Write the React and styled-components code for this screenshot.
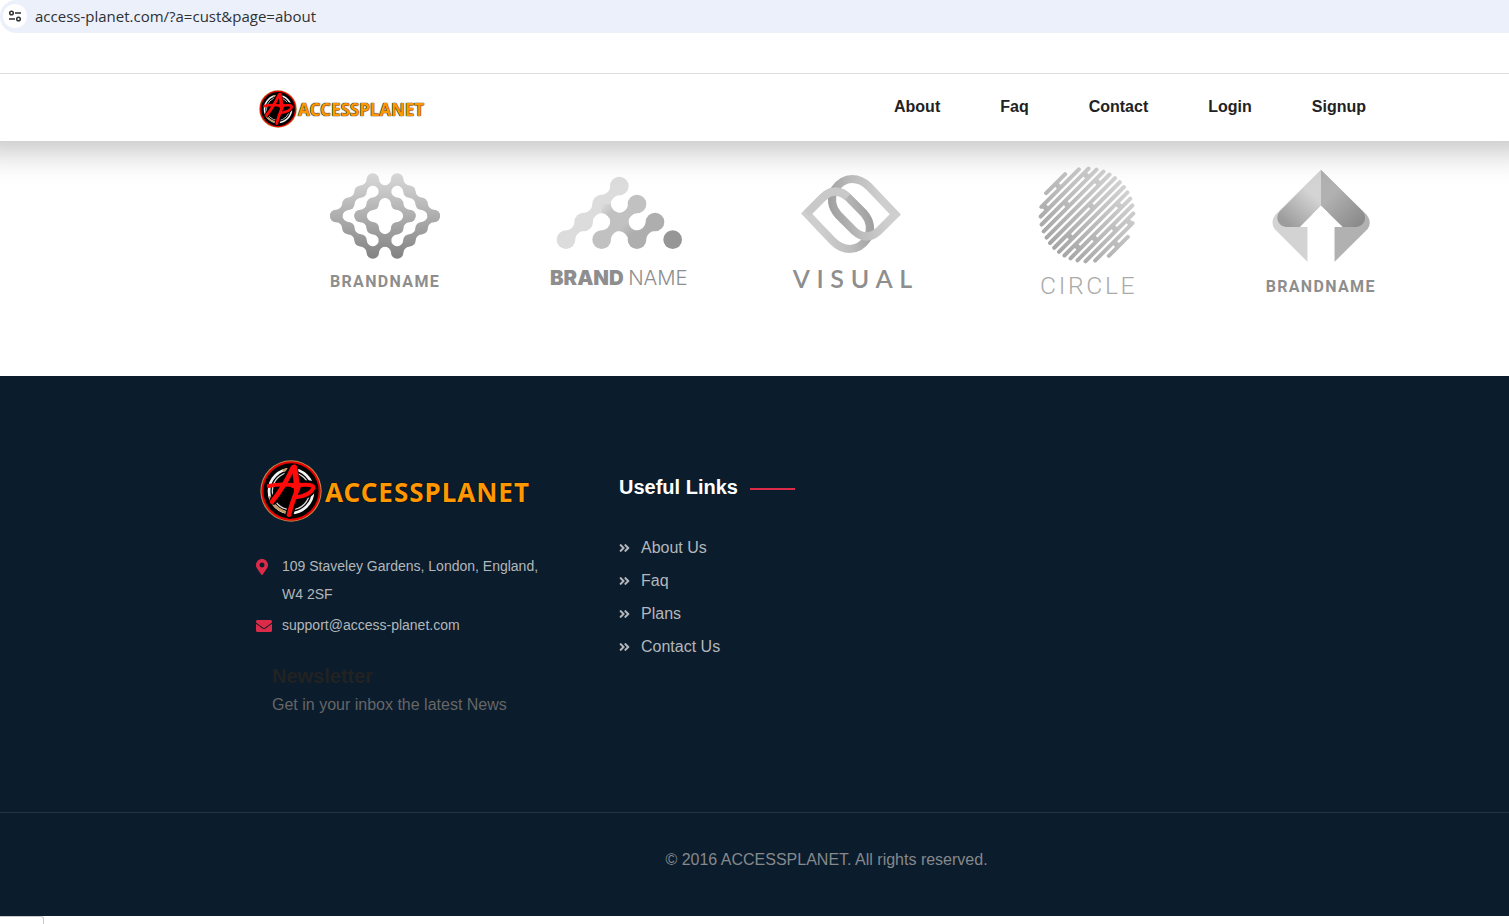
import React from 'react';
import styled, { createGlobalStyle, ThemeProvider } from 'styled-components';
import {
  FaAngleDoubleRight,
  FaEnvelope,
  FaMapMarkerAlt,
} from 'react-icons/fa';

const theme = {
  navy: '#0b1c2c',
  red: '#dc2b48',
  orange: '#ff9800',
  offBlack: '#222222',
  muted: '#b3b7bb',
};

const GlobalStyle = createGlobalStyle`
  * {
    box-sizing: border-box;
  }

  body {
    margin: 0;
    background: #ffffff;
    font-family: 'Liberation Sans', Arial, sans-serif;
    font-size: 16px;
    line-height: 28px;
  }

  a {
    color: inherit;
    text-decoration: none;
  }
`;

const AddressBar = styled.div`
  display: flex;
  align-items: center;
  gap: 8px;
  height: 33px;
  padding: 0 3px 2px;
  background: #ebf0fa;
  border-radius: 16px 0 0 16px;
`;

const SiteInfo = styled.button`
  display: flex;
  align-items: center;
  justify-content: center;
  width: 24px;
  height: 24px;
  padding: 0;
  border: 0;
  border-radius: 50%;
  background: #ffffff;
`;

const AddressInput = styled.input`
  flex: 1;
  padding: 0;
  border: 0;
  outline: 0;
  background: transparent;
  color: #2f3134;
  font-family: 'Open Sans', sans-serif;
  font-size: 15px;
`;

const TopStrip = styled.div`
  height: 41px;
  border-bottom: 1px solid #dedede;
`;

const Header = styled.header`
  display: flex;
  align-items: center;
  justify-content: space-between;
  height: 67px;
  padding: 0 112px 0 256px;
  background: #ffffff;
  box-shadow: 0 -20px 30px 30px rgba(0, 0, 0, 0.24);
  clip-path: inset(0 0 -60px 0);
`;

const LogoLink = styled.a`
  display: flex;
  align-items: center;
  gap: ${props => (props.$large ? '3px' : '1px')};
  margin-left: ${props => (props.$large ? '4px' : '3px')};
  padding-top: ${props => (props.$large ? '0' : '2px')};

  svg {
    width: ${props => (props.$large ? '62px' : '38px')};
    height: ${props => (props.$large ? '62px' : '38px')};
  }
`;

const LogoText = styled.span`
  padding-top: 2px;
  color: ${props => props.theme.orange};
  font-family: 'Noto Sans', sans-serif;
  font-size: ${props => (props.$large ? '26px' : '17px')};
  font-weight: 700;
  letter-spacing: ${props => (props.$large ? '1px' : '0')};
  text-shadow: 0 0 1px #000000, 0 0 1px #000000;
`;

const Nav = styled.nav`
  display: flex;
  gap: 60px;
  padding: 0 31px 2px 0;
  color: ${props => props.theme.offBlack};
  font-weight: 700;
`;

const Brands = styled.section`
  display: grid;
  grid-template-columns: repeat(5, 1fr);
  justify-items: center;
  padding: 19px 71px 76px 268px;

  svg {
    width: 160px;
    height: 140px;
  }
`;

const BrandText = styled.text`
  fill: ${props => props.$color || '#8e8e8e'};
  font-family: ${props => props.$font};
  font-size: ${props => props.$size}px;
  font-weight: ${props => props.$weight};
  letter-spacing: ${props => props.$tracking || 0}px;
  text-anchor: ${props => props.$anchor || 'start'};
`;

const Footer = styled.footer`
  background: ${props => props.theme.navy};
  color: ${props => props.theme.muted};
`;

const FooterColumns = styled.div`
  display: grid;
  grid-template-columns: 363px 1fr;
  padding: 84px 112px 93px 256px;
`;

const ContactList = styled.ul`
  display: grid;
  gap: 3px;
  margin: 30px 0 0;
  padding: 0;
  list-style: none;
  font-size: 14px;
`;

const ContactItem = styled.li`
  display: flex;
  gap: 10px;
  width: 300px;

  svg {
    flex: none;
    width: 16px;
    height: 16px;
    margin-top: 7px;
    color: ${props => props.theme.red};
  }
`;

const Newsletter = styled.div`
  margin-top: 23px;
  padding-left: 16px;
  color: #666666;

  h4 {
    margin: 0 0 1px;
    color: ${props => props.theme.offBlack};
    font-size: 20px;
  }

  p {
    margin: 0;
  }
`;

const LinksTitle = styled.h3`
  display: flex;
  align-items: center;
  gap: 12px;
  margin: 13px 0 30px;
  color: #ffffff;
  font-size: 20px;

  &::after {
    content: '';
    width: 45px;
    height: 2px;
    margin-top: 4px;
    background: ${props => props.theme.red};
  }
`;

const LinkList = styled.ul`
  margin: 0;
  padding: 0;
  list-style: none;
  line-height: 33px;

  li {
    display: flex;
  }

  a {
    display: flex;
    align-items: center;
    gap: 11px;
  }

  svg {
    width: 11px;
    height: 16px;
  }
`;

const Copyright = styled.div`
  padding: 33px 112px 42px 256px;
  border-top: 1px solid #233340;
  color: #85898d;
  text-align: center;
`;

const StatusBubble = styled.div`
  width: 44px;
  height: 8px;
  border: 1px solid #c9cbce;
  border-width: 1px 1px 0 0;
  border-radius: 0 3px 0 0;
`;

const Badge = () => (
  <svg viewBox="0 0 186 186" aria-hidden="true">
    <circle cx="93" cy="93" r="92" fill="#b98a4c" />
    <circle cx="93" cy="93" r="89" fill="#e80000" />
    <circle cx="93" cy="93" r="83" fill="#000000" />
    <g fill="none">
      <circle cx="93" cy="93" r="66" stroke="#f4f4f4" strokeWidth="8" />
      <circle cx="93" cy="93" r="56" stroke="#d8d8d8" strokeWidth="4" />
      <path
        d="M68 32A66 66 0 0 1 103 28M30 108A66 66 0 0 0 78 157"
        stroke="#c39a62"
        strokeWidth="8"
      />
      <g stroke="#000000" strokeWidth="24" strokeLinecap="round">
        <path d="M97 24L40 122M102 24L110 100" />
        <path d="M116 74L88 164" />
        <path d="M116 76Q162 66 158 84Q152 106 108 110" />
      </g>
      <g stroke="#ff0909" strokeLinecap="round" strokeLinejoin="round">
        <path d="M98 24Q72 82 36 125" strokeWidth="14" />
        <path d="M103 22Q110 54 110 90" strokeWidth="17" />
        <path d="M26 78Q60 70 108 76" strokeWidth="12" />
        <path d="M118 74Q94 132 87 164" strokeWidth="14" />
        <path d="M98 78Q166 68 160 85Q150 106 108 112" strokeWidth="12" />
      </g>
    </g>
  </svg>
);

const Logo = ({ large }) => (
  <LogoLink href="#home" $large={large}>
    <Badge />
    <LogoText $large={large}>ACCESSPLANET</LogoText>
  </LogoLink>
);

// Neck between two dots of a lattice, s is the lattice step and
// up says which way the diagonal runs
const neck = (x, y, s, up) => {
  const dy = up ? -s : s;
  const arc = `A${s * 0.62} ${s * 0.62} 0 0 ${up ? 0 : 1}`;
  return (
    `M${x} ${y}V${y + dy / 2}${arc} ${x + s / 2} ${y + dy}H${x + s}` +
    `V${y + dy / 2}${arc} ${x + s / 2} ${y}Z`
  );
};

const LATTICE = 36.6;
const latticeRings = [
  [[-4, 0], [-3, -1], [-2, -2], [-1, -3], [0, -2], [1, -3], [2, -2], [3, -1]],
  [[-2, 0], [-1, -1], [0, -2], [1, -1]],
];
const latticeDots = [];
const latticeNecks = [];
latticeRings.forEach(ring => {
  const half = ring.concat([[-ring[0][0], 0]]);
  half.forEach(([x, y], i) => {
    latticeDots.push([x, y], [x, -y]);
    if (i < half.length - 1) {
      const up = half[i + 1][1] < y;
      latticeNecks.push([x, y, up], [x, -y, !up]);
    }
  });
});

const BrandLattice = () => (
  <svg viewBox="-17 0 480 420" role="img" aria-label="Brandname">
    <defs>
      <linearGradient
        id="lattice"
        gradientUnits="userSpaceOnUse"
        x1="0"
        y1="40"
        x2="0"
        y2="298"
      >
        <stop offset="0" stopColor="#dadada" />
        <stop offset="1" stopColor="#818181" />
      </linearGradient>
    </defs>
    <g fill="url(#lattice)">
      {latticeDots.map(([x, y], i) => (
        <circle key={i} cx={223 + x * LATTICE} cy={168 + y * LATTICE} r="18.6" />
      ))}
      <path
        d={latticeNecks
          .map(([x, y, up]) =>
            neck(223 + x * LATTICE, 168 + y * LATTICE, LATTICE, up)
          )
          .join('')}
      />
    </g>
    <BrandText
      x="58"
      y="382"
      $font="'Roboto', sans-serif"
      $size={48}
      $weight={700}
      $tracking={4}
    >
      BRANDNAME
    </BrandText>
  </svg>
);

const STEP = 53.4;
const pyramid = [
  { color: '#c1c1c1', dots: [[185, 239], [238, 186], [291, 132]] },
  { color: '#dcdcdc', dots: [[78, 239], [131, 186], [185, 132], [238, 78]] },
  { color: '#aeaeae', dots: [[291, 239], [345, 186]] },
  { color: '#969696', dots: [[398, 239]] },
];

const BrandPyramid = () => (
  <svg viewBox="-3 0 480 420" role="img" aria-label="Brandname">
    <defs>
      <linearGradient id="pyramidLink" x2="1" y2="1">
        <stop offset="0" stopColor="#dcdcdc" />
        <stop offset="0.5" stopColor="#c1c1c1" />
        <stop offset="1" stopColor="#c1c1c1" />
      </linearGradient>
      <linearGradient id="pyramidLinkDark" x2="1" y2="1">
        <stop offset="0.2" stopColor="#c1c1c1" />
        <stop offset="0.7" stopColor="#aeaeae" />
      </linearGradient>
    </defs>
    {pyramid.map(({ color, dots }) => (
      <g key={color} fill={color}>
        {dots.map(([x, y]) => (
          <circle key={x} cx={x} cy={y} r="28" />
        ))}
        {dots.slice(1).map((_, i) => (
          <path key={i} d={neck(dots[i][0], dots[i][1], STEP, true)} />
        ))}
      </g>
    ))}
    <path d={neck(185, 132, STEP, false)} fill="url(#pyramidLink)" />
    <path d={neck(238, 186, STEP, false)} fill="url(#pyramidLinkDark)" />
    <BrandText
      x="30"
      y="375"
      $font="'Inter', sans-serif"
      $size={61}
      $weight={900}
    >
      BRAND
    </BrandText>
    <BrandText
      x="443"
      y="375"
      $font="'Inter', sans-serif"
      $size={61}
      $weight={300}
      $anchor="end"
    >
      NAME
    </BrandText>
  </svg>
);

const leafPath =
  'M80 161L130 111Q166 78 203 111L252 160Q282 195 262 236Q240 267 210 267Q182 267 160 245Z';

const BrandVisual = () => (
  <svg viewBox="-21 0 480 420" role="img" aria-label="Visual">
    <defs>
      <linearGradient
        id="leaf"
        gradientUnits="userSpaceOnUse"
        x1="120"
        y1="200"
        x2="272"
        y2="170"
      >
        <stop offset="0" stopColor="#cecece" />
        <stop offset="0.5" stopColor="#bdbdbd" />
        <stop offset="1" stopColor="#a0a0a0" />
      </linearGradient>
    </defs>
    <g fill="none" stroke="url(#leaf)" strokeWidth="24">
      <path d={leafPath} />
      <path d={leafPath} transform="rotate(180 213 162)" />
      <path d="M80 161L130 111Q166 78 203 111" stroke="#c9c9c9" />
    </g>
    <BrandText
      x="38"
      y="383"
      $font="'Lato', sans-serif"
      $size={75}
      $weight={600}
      $tracking={20}
    >
      VISUAL
    </BrandText>
  </svg>
);

const HATCH = 19;
const hatchRows = Array.from({ length: 15 }, (_, i) => i - 7);
// [row above the link, place along the row]
const hatchLinks = [
  [-7, 0], [-6, -72], [-4, -20], [-5, 82], [-3, 92],
  [-1, 28], [0, -82], [2, -88], [2, 88], [3, -34],
  [4, 30], [5, 74], [6, 0],
];

const BrandCircle = () => (
  <svg viewBox="-39 0 480 420" role="img" aria-label="Circle">
    <defs>
      <linearGradient
        id="hatch"
        gradientUnits="userSpaceOnUse"
        x1="-140"
        y1="0"
        x2="140"
        y2="0"
      >
        <stop offset="0" stopColor="#a6a6a6" />
        <stop offset="1" stopColor="#d2d2d2" />
      </linearGradient>
    </defs>
    <g transform="translate(201 165) rotate(-45)">
      <path
        d={hatchRows
          .map(row => {
            const half = Math.sqrt(139 * 139 - (row * HATCH) ** 2);
            return `M${-half} ${row * HATCH}H${half}`;
          })
          .join('')}
        stroke="url(#hatch)"
        strokeWidth="12"
        strokeLinecap="round"
      />
      {hatchLinks.map(([row, x]) => (
        <rect
          key={`${row}${x}`}
          x={x - 8}
          y={row * HATCH}
          width="16"
          height={HATCH}
          fill="url(#hatch)"
        />
      ))}
    </g>
    <BrandText
      x="60"
      y="402"
      $font="'Roboto', sans-serif"
      $size={74}
      $weight={300}
      $tracking={8}
      $color="#aaaaaa"
    >
      CIRCLE
    </BrandText>
  </svg>
);

const BrandArrow = () => (
  <svg viewBox="-27 0 480 420" role="img" aria-label="Brandname">
    <defs>
      <linearGradient id="foldLeft" x1="0.9" y1="0.1" x2="0.3" y2="1">
        <stop offset="0.3" stopColor="#d4d4d4" />
        <stop offset="1" stopColor="#9c9c9c" />
      </linearGradient>
      <linearGradient id="foldRight" x1="0.1" y1="0.1" x2="0.8" y2="1">
        <stop offset="0.3" stopColor="#b1b1b1" />
        <stop offset="1" stopColor="#8b8b8b" />
      </linearGradient>
    </defs>
    <path
      d="M213 30L76 164Q60 186 74 207L173 306V201L213 100Z"
      fill="#d3d3d3"
    />
    <path
      d="M213 30L350 164Q367 186 353 207L253 306V201L213 100Z"
      fill="#b1b1b1"
    />
    <path
      d="M213 30L90 153C73 172 84 201 112 201H150L213 137Z"
      fill="url(#foldLeft)"
    />
    <path
      d="M213 30L337 153C354 172 343 201 315 201H278L213 137Z"
      fill="url(#foldRight)"
    />
    <path d="M213 137L278 201H253V306H173V201H150Z" fill="#ffffff" />
    <BrandText
      x="47"
      y="395"
      $font="'Roboto', sans-serif"
      $size={48}
      $weight={700}
      $tracking={4}
    >
      BRANDNAME
    </BrandText>
  </svg>
);

const navItems = ['About', 'Faq', 'Contact', 'Login', 'Signup'];
const footerLinks = ['About Us', 'Faq', 'Plans', 'Contact Us'];

const toHash = label => `#${label.toLowerCase().replace(' ', '-')}`;

const App = () => (
  <ThemeProvider theme={theme}>
    <GlobalStyle />
    <AddressBar>
      <SiteInfo type="button" aria-label="View site information">
        <svg width="14" height="14" viewBox="0 0 14 14" aria-hidden="true">
          <g fill="none" stroke="#2f3134" strokeWidth="1.5">
            <circle cx="3.5" cy="4" r="1.8" />
            <path d="M7 4h6M1 10h6" />
            <circle cx="10.5" cy="10" r="1.8" />
          </g>
        </svg>
      </SiteInfo>
      <AddressInput
        aria-label="Address"
        defaultValue="access-planet.com/?a=cust&page=about"
      />
    </AddressBar>
    <TopStrip />
    <Header>
      <Logo />
      <Nav>
        {navItems.map(item => (
          <a key={item} href={toHash(item)}>
            {item}
          </a>
        ))}
      </Nav>
    </Header>
    <Brands>
      <BrandLattice />
      <BrandPyramid />
      <BrandVisual />
      <BrandCircle />
      <BrandArrow />
    </Brands>
    <Footer>
      <FooterColumns>
        <div>
          <Logo large />
          <ContactList>
            <ContactItem>
              <FaMapMarkerAlt preserveAspectRatio="xMinYMid meet" />
              <span>109 Staveley Gardens, London, England, W4 2SF</span>
            </ContactItem>
            <ContactItem>
              <FaEnvelope />
              <a href="mailto:support@access-planet.com">
                support@access-planet.com
              </a>
            </ContactItem>
          </ContactList>
          <Newsletter>
            <h4>Newsletter</h4>
            <p>Get in your inbox the latest News</p>
          </Newsletter>
        </div>
        <div>
          <LinksTitle>Useful Links</LinksTitle>
          <LinkList>
            {footerLinks.map(item => (
              <li key={item}>
                <a href={toHash(item)}>
                  <FaAngleDoubleRight />
                  {item}
                </a>
              </li>
            ))}
          </LinkList>
        </div>
      </FooterColumns>
      <Copyright>© 2016 ACCESSPLANET. All rights reserved.</Copyright>
    </Footer>
    <StatusBubble />
  </ThemeProvider>
);

export default App;
